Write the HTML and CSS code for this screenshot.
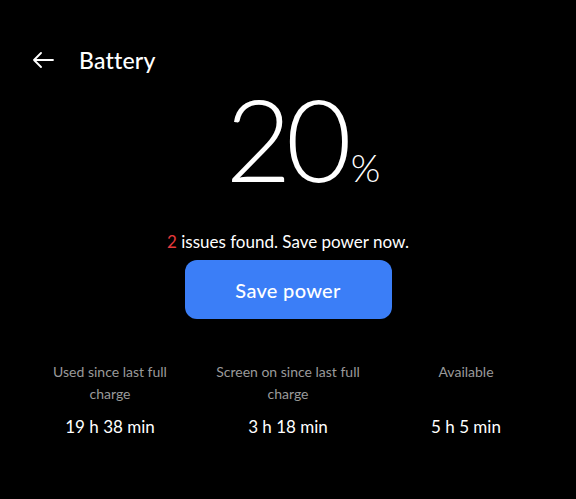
FILE: index.html
```html
<!DOCTYPE html>
<html>
<head>
<meta charset="utf-8">
<link rel="stylesheet" href="styles.css">
</head>
<body>
<div class="screen">
  <header class="topbar">
    <svg class="back" width="22" height="16" viewBox="0 0 22 16"><path d="M21 8H2M9 1L2 8l7 7" fill="none" stroke="#fff" stroke-width="1.8" stroke-linecap="round" stroke-linejoin="round"/></svg>
    <h1 class="title">Battery</h1>
  </header>
  <div class="level"><span class="num">20</span><span class="pct">%</span></div>
  <p class="issues"><span class="red">2</span> issues found. Save power now.</p>
  <div class="btn-row"><button class="save">Save power</button></div>
  <div class="stats">
    <div class="stat"><div class="label">Used since last full charge</div><div class="value">19 h 38 min</div></div>
    <div class="stat"><div class="label">Screen on since last full charge</div><div class="value">3 h 18 min</div></div>
    <div class="stat"><div class="label">Available</div><div class="value">5 h 5 min</div></div>
  </div>
</div>
</body>
</html>
```
FILE: styles.css
```css
html, body { margin: 0; background: #000; }
body { font-family: "Lato", "Noto Sans", sans-serif; color: #fff; width: 576px; height: 499px; overflow: hidden; }
.screen { padding-top: 42px; }
.topbar { display: flex; align-items: center; height: 36px; padding-left: 32px; }
.back { display: block; margin-right: 25px; }
.title { margin: 0; font-size: 23px; font-weight: 500; letter-spacing: 0.2px; }
.level { display: flex; justify-content: center; align-items: baseline; margin-top: 5px; margin-bottom: 3px; height: 110px; padding-left: 30px; }
.num { font-size: 114px; font-weight: 300; line-height: 110px; letter-spacing: -6px; }
.pct { font-size: 38px; font-weight: 300; margin-left: 5px; }
.issues { margin: 39px 0 0; text-align: center; font-size: 17px; line-height: 20px; color: #fff; }
.red { color: #e5393b; }
.btn-row { display: flex; justify-content: center; margin-top: 8px; }
.save { width: 207px; height: 59px; border: none; border-radius: 12px; background: #3b7ef7; color: #fff; font-family: inherit; font-size: 20px; font-weight: 500; letter-spacing: 0.3px; }
.stats { display: grid; grid-template-columns: repeat(3, 178px); padding: 0 21px; margin-top: 42px; }
.stat { display: flex; flex-direction: column; align-items: center; text-align: center; }
.label { color: #9a9a9a; font-size: 14px; line-height: 22px; height: 44px; max-width: 150px; }
.value { margin-top: 11px; font-size: 17px; line-height: 22px; }
```
